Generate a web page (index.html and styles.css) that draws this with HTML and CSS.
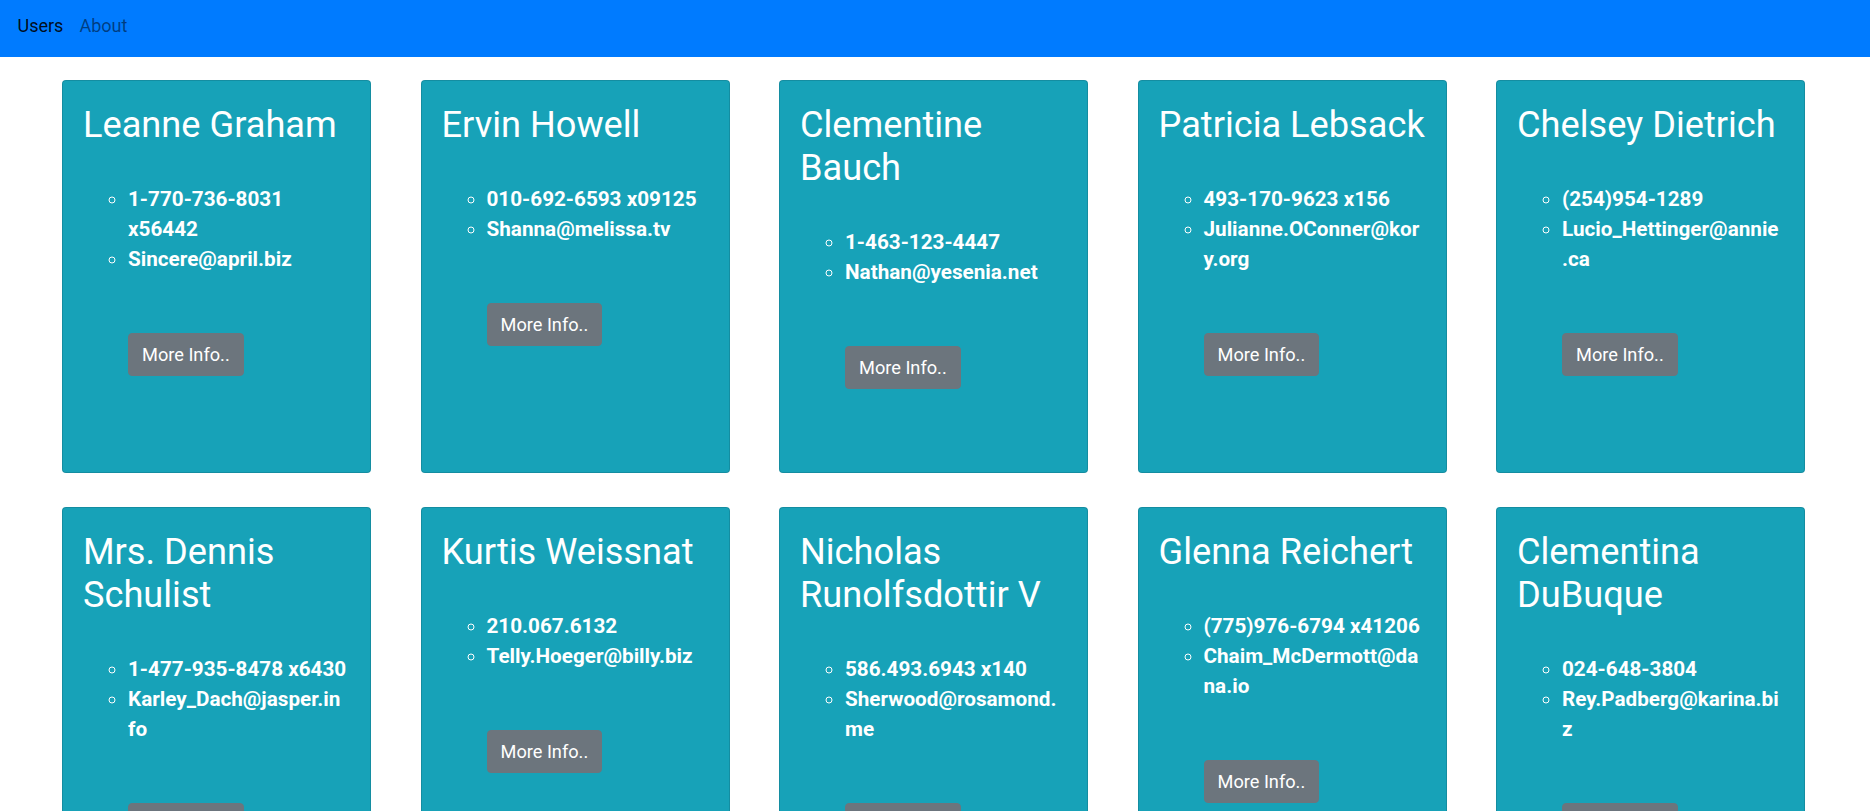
FILE: index.html
```html
<!DOCTYPE html>
<html lang="en">
<head>
<meta charset="utf-8">
<title>Users</title>
<link rel="stylesheet" href="styles.css">
</head>
<body>
<nav class="navbar">
  <a class="nav-link active" href="#">Users</a>
  <a class="nav-link" href="#">About</a>
</nav>
<main class="users">
  <div class="card"><div class="card-body">
    <h1 class="card-title">Leanne Graham</h1>
    <ul class="contact"><li>1-770-736-8031 x56442</li><li>Sincere@april.biz</li></ul>
    <div class="actions"><button class="btn">More Info..</button></div>
  </div></div>
  <div class="card"><div class="card-body">
    <h1 class="card-title">Ervin Howell</h1>
    <ul class="contact"><li>010-692-6593 x09125</li><li>Shanna@melissa.tv</li></ul>
    <div class="actions"><button class="btn">More Info..</button></div>
  </div></div>
  <div class="card"><div class="card-body">
    <h1 class="card-title">Clementine Bauch</h1>
    <ul class="contact"><li>1-463-123-4447</li><li>Nathan@yesenia.net</li></ul>
    <div class="actions"><button class="btn">More Info..</button></div>
  </div></div>
  <div class="card"><div class="card-body">
    <h1 class="card-title">Patricia Lebsack</h1>
    <ul class="contact"><li>493-170-9623 x156</li><li>Julianne.OConner@kory.org</li></ul>
    <div class="actions"><button class="btn">More Info..</button></div>
  </div></div>
  <div class="card"><div class="card-body">
    <h1 class="card-title">Chelsey Dietrich</h1>
    <ul class="contact"><li>(254)954-1289</li><li>Lucio_Hettinger@annie.ca</li></ul>
    <div class="actions"><button class="btn">More Info..</button></div>
  </div></div>
  <div class="card"><div class="card-body">
    <h1 class="card-title">Mrs. Dennis Schulist</h1>
    <ul class="contact"><li>1-477-935-8478 x6430</li><li>Karley_Dach@jasper.info</li></ul>
    <div class="actions"><button class="btn">More Info..</button></div>
  </div></div>
  <div class="card"><div class="card-body">
    <h1 class="card-title">Kurtis Weissnat</h1>
    <ul class="contact"><li>210.067.6132</li><li>Telly.Hoeger@billy.biz</li></ul>
    <div class="actions"><button class="btn">More Info..</button></div>
  </div></div>
  <div class="card"><div class="card-body">
    <h1 class="card-title">Nicholas Runolfsdottir V</h1>
    <ul class="contact"><li>586.493.6943 x140</li><li>Sherwood@rosamond.me</li></ul>
    <div class="actions"><button class="btn">More Info..</button></div>
  </div></div>
  <div class="card"><div class="card-body">
    <h1 class="card-title">Glenna Reichert</h1>
    <ul class="contact"><li>(775)976-6794 x41206</li><li>Chaim_McDermott@dana.io</li></ul>
    <div class="actions"><button class="btn">More Info..</button></div>
  </div></div>
  <div class="card"><div class="card-body">
    <h1 class="card-title">Clementina DuBuque</h1>
    <ul class="contact"><li>024-648-3804</li><li>Rey.Padberg@karina.biz</li></ul>
    <div class="actions"><button class="btn">More Info..</button></div>
  </div></div>
</main>
</body>
</html>
```
FILE: styles.css
```css
* { box-sizing: border-box; }

html, body {
  margin: 0;
  padding: 0;
  background: #fff;
}

body {
  font-family: Roboto, "Liberation Sans", sans-serif;
  color: #212529;
}

.navbar {
  display: flex;
  align-items: flex-start;
  height: 57px;
  padding: 14px 0 0 9.5px;
  background: #007bff;
}

.nav-link {
  font-size: 18px;
  line-height: 24px;
  padding: 0 8px;
  color: rgba(0, 0, 0, 0.5);
  text-decoration: none;
}

.nav-link.active {
  color: rgba(0, 0, 0, 0.9);
}

.users {
  display: grid;
  grid-template-columns: repeat(5, 309px);
  column-gap: 49.5px;
  row-gap: 34px;
  padding: 23px 0 0 62px;
}

.card {
  height: 393px;
  background: #17a2b8;
  border: 1px solid rgba(0, 0, 0, 0.125);
  border-radius: 4px;
  color: #fff;
}

.card-body {
  padding: 20px;
}

.card-title {
  margin: 1.7px 0 0;
  font-size: 36.2px;
  font-weight: 400;
  line-height: 43.2px;
}

.contact {
  margin: 38.3px 0 0;
  padding: 0 3px 0 45px;
  list-style: circle;
  font-size: 20.7px;
  font-weight: 700;
  line-height: 30px;
  overflow-wrap: break-word;
}

.actions {
  margin: 59.1px 0 0 45px;
}

.btn {
  display: inline-block;
  font-family: inherit;
  font-size: 18.2px;
  font-weight: 400;
  line-height: 28.4px;
  padding: 7px 13px 5px;
  color: #fff;
  background: #6c757d;
  border: 1px solid #6c757d;
  border-radius: 4px;
  cursor: pointer;
}
```
